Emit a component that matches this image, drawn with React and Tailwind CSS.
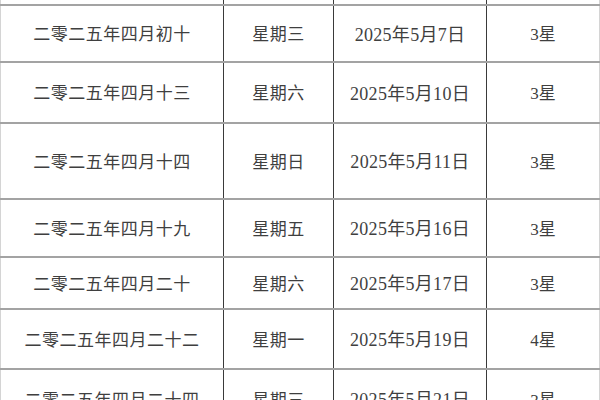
const rows = [
  { lunar: "二零二五年四月初十", week: "星期三", date: "2025年5月7日", star: "3星", h: "h-[57px]" },
  { lunar: "二零二五年四月十三", week: "星期六", date: "2025年5月10日", star: "3星", h: "h-[61px]" },
  { lunar: "二零二五年四月十四", week: "星期日", date: "2025年5月11日", star: "3星", h: "h-[76px]" },
  { lunar: "二零二五年四月十九", week: "星期五", date: "2025年5月16日", star: "3星", h: "h-[58px]" },
  { lunar: "二零二五年四月二十", week: "星期六", date: "2025年5月17日", star: "3星", h: "h-[52px]" },
  { lunar: "二零二五年四月二十二", week: "星期一", date: "2025年5月19日", star: "4星", h: "h-[60px]" },
  { lunar: "二零二五年四月二十四", week: "星期三", date: "2025年5月21日", star: "3星", h: "h-[60px]" },
];

const Cell = ({ children, className = "" }) => (
  <div className={`flex items-center justify-center pt-[3px] ${className}`}>{children}</div>
);

const Row = ({ lunar, week, date, star, h }) => (
  <div className={`grid grid-cols-[223px_110px_153px_114px] border-b-2 border-[#a3a3a3] ${h}`}>
    <Cell className="border-l border-[#d4d4d4] tracking-[0.5px]">{lunar}</Cell>
    <Cell className="border-l border-[#3a3a3a] tracking-[0.5px]">{week}</Cell>
    <Cell className="border-l border-[#3a3a3a] text-[18px] tracking-[0.3px]">{date}</Cell>
    <Cell className="border-l border-r border-[#3a3a3a] border-r-[#d4d4d4]">{star}</Cell>
  </div>
);

export default function App() {
  return (
    <div
      className="w-[600px] h-[400px] overflow-hidden bg-white text-[17px] text-[#3f3f3f]"
      style={{ fontFamily: '"Liberation Serif", "Noto Sans CJK SC", serif' }}
    >
      <div className="grid grid-cols-[223px_110px_153px_114px] h-[6px] border-b-2 border-[#a3a3a3]">
        <div className="border-l border-[#d4d4d4]" />
        <div className="border-l border-[#3a3a3a]" />
        <div className="border-l border-[#3a3a3a]" />
        <div className="border-l border-r border-[#3a3a3a] border-r-[#d4d4d4]" />
      </div>
      {rows.map((r, i) => (
        <Row key={i} {...r} />
      ))}
    </div>
  );
}
